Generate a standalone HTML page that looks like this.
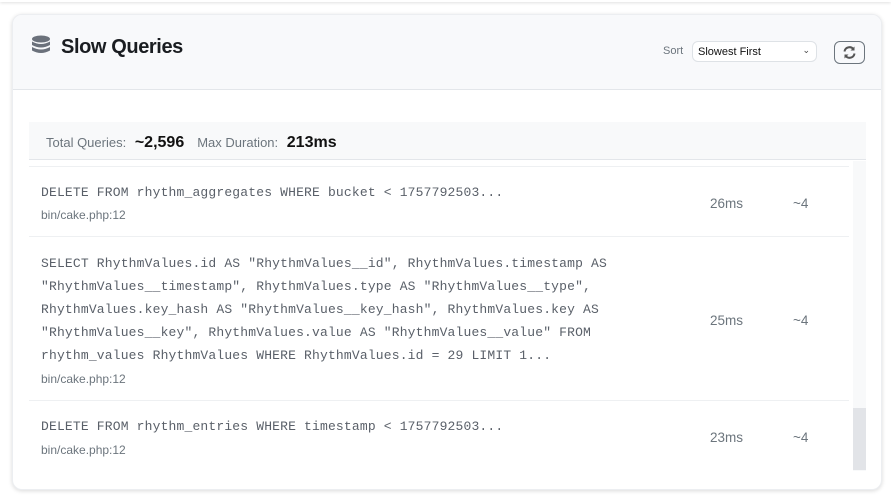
<!DOCTYPE html>
<html><head><meta charset="utf-8"><style>
*{box-sizing:border-box;margin:0;padding:0}
body{width:891px;height:499px;background:#fff;position:relative;overflow:hidden;font-family:"Liberation Sans",sans-serif;color:#212529}
.top{position:absolute;left:0;top:-10px;width:891px;height:12px;box-shadow:0 1px 3px rgba(0,0,0,.12);background:#fff}
.card{position:absolute;left:12px;top:14px;width:870px;height:476px;border-radius:10px;background:#fff;box-shadow:0 1px 4px rgba(0,0,0,.15);border:1px solid #eceef1;overflow:hidden}
.hdr{position:absolute;left:0;top:0;width:100%;height:75px;background:#f8f9fb;border-bottom:1px solid #e3e6ea}
.title{position:absolute;left:48px;top:21px;font-size:20px;font-weight:bold;color:#1a1d21;letter-spacing:-.4px}
.icon{position:absolute;left:18px;top:20px}
.sort{position:absolute;left:650px;top:30px;font-size:11px;color:#6c757d}
.sel{position:absolute;left:679px;top:26px;width:125px;height:21px;border:1px solid #dee2e6;border-radius:6px;background:#fff;font-size:11px;color:#111;padding:4px 0 0 5px}
.sel span{position:absolute;right:6px;top:3px;font-size:9px;color:#444}
.btn{position:absolute;left:821px;top:26px;width:31px;height:23px;border:1px solid #6c757d;border-radius:6px}
.stats{position:absolute;left:16px;top:107px;width:837px;height:38px;background:#f8f9fa;border-bottom:1px solid #e3e6ea;font-size:13px;color:#6c757d;padding:12px 0 0 17px}
.stats b{color:#111;font-size:16px;margin:0 13px 0 5px}
.track{position:absolute;left:840px;top:146px;width:13px;height:310px;background:#f8f9fa}
.thumb{position:absolute;left:840px;top:393px;width:13px;height:62px;background:#e2e4e8}
.sep{position:absolute;left:16px;width:820px;height:1px;background:#eef0f2}
.q{position:absolute;left:28px;font-family:"Liberation Mono",monospace;font-size:13px;letter-spacing:.17px;line-height:23px;color:#5a6069;white-space:pre}
.f{position:absolute;left:28px;font-size:12px;color:#6c757d}
.d{position:absolute;left:697px;font-size:13.5px;color:#6c757d}
.c{position:absolute;left:780px;font-size:13.5px;color:#6c757d}
</style></head><body>
<div class="top"></div>
<div class="card">
<div class="hdr">
<svg class="icon" width="20" height="20" viewBox="0 0 20 20"><ellipse cx="10" cy="4" rx="9" ry="3.5" fill="#6b717b"/><path d="M1 6.5q9 5 18 0v3.5q-9 5-18 0z" fill="#6b717b"/><path d="M1 12q9 5 18 0v3.5q-9 5-18 0z" fill="#6b717b"/></svg>
<div class="title">Slow Queries</div>
<div class="sort">Sort</div>
<div class="sel">Slowest First<span>&#8964;</span></div>
<div class="btn"><svg width="29" height="21" viewBox="0 0 29 21"><path d="M9.5 9.5a5 5 0 0 1 9-2.2M19.5 11.5a5 5 0 0 1-9 2.2" stroke="#555" stroke-width="2" fill="none"/><path d="M19.5 4.5v4h-4z M9.5 16.5v-4h4z" fill="#555"/></svg></div>
</div>
<div class="stats">Total Queries: <b>~2,596</b>Max Duration: <b>213ms</b></div>
<div class="track"></div><div class="thumb"></div>
<div class="sep" style="top:151px"></div>
<div class="q" style="top:166px">DELETE FROM rhythm_aggregates WHERE bucket &lt; 1757792503...</div>
<div class="f" style="top:193px">bin/cake.php:12</div>
<div class="d" style="top:181px">26ms</div><div class="c" style="top:181px">~4</div>
<div class="sep" style="top:221px"></div>
<div class="q" style="top:237px">SELECT RhythmValues.id AS "RhythmValues__id", RhythmValues.timestamp AS
"RhythmValues__timestamp", RhythmValues.type AS "RhythmValues__type",
RhythmValues.key_hash AS "RhythmValues__key_hash", RhythmValues.key AS
"RhythmValues__key", RhythmValues.value AS "RhythmValues__value" FROM
rhythm_values RhythmValues WHERE RhythmValues.id = 29 LIMIT 1...</div>
<div class="f" style="top:357px">bin/cake.php:12</div>
<div class="d" style="top:298px">25ms</div><div class="c" style="top:298px">~4</div>
<div class="sep" style="top:385px"></div>
<div class="q" style="top:400px">DELETE FROM rhythm_entries WHERE timestamp &lt; 1757792503...</div>
<div class="f" style="top:428px">bin/cake.php:12</div>
<div class="d" style="top:415px">23ms</div><div class="c" style="top:415px">~4</div>
</div>
</body></html>
